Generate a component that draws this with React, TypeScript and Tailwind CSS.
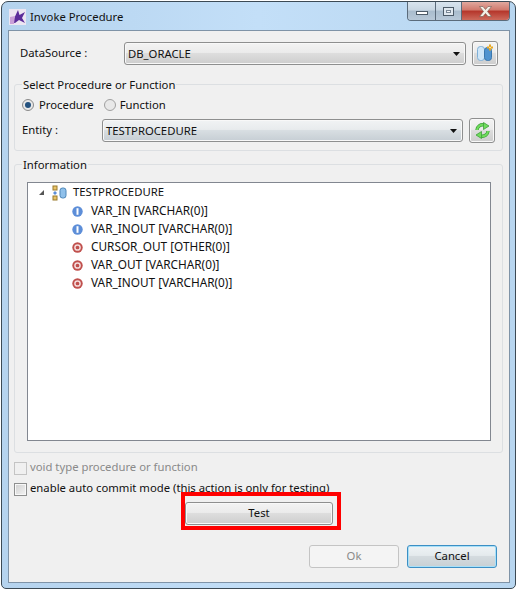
import React from 'react';

const font = 'font-["Noto_Sans",sans-serif] text-[11.3px] text-[#111]';
const grey = 'bg-[linear-gradient(#f3f3f3_0%,#ebebeb_45%,#dddddd_50%,#cdcdcd_100%)]';

function Combo({ value, width, tint }: { value: string; width: string; tint?: boolean }) {
  return (
    <div className={`${width} h-[23px] rounded-[3px] border border-[#8e8f8f] ${tint ? 'bg-[linear-gradient(#f1f3f4_0%,#e8ebed_45%,#d8dee2_50%,#c6ced4_100%)]' : grey} flex items-center justify-between pl-[3px] pr-[5px] shadow-[inset_0_0_0_1px_#f8f8f8]`}>
      <span className="leading-none">{value}</span>
      <svg width="7" height="4" viewBox="0 0 7 4"><path d="M0 0h7L3.5 4z" fill="#111" /></svg>
    </div>
  );
}

function IconButton({ children }: { children: React.ReactNode }) {
  return (
    <div className={`w-[26px] h-[25px] -mt-px rounded-[3px] border border-[#8e8f8f] ${grey} flex items-center justify-center shadow-[inset_0_0_0_1px_#f8f8f8]`}>
      {children}
    </div>
  );
}

function Group({ label, className, children }: { label: string; className: string; children: React.ReactNode }) {
  return (
    <div className={`relative rounded-[3px] border border-[#dcdfe2] ${className}`}>
      <span className="absolute left-[7px] -top-[8px] bg-[#f0f0f0] px-px leading-[16px]">{label}</span>
      {children}
    </div>
  );
}

function ParamIcon({ kind }: { kind: 'in' | 'out' }) {
  if (kind === 'in') {
    return (
      <svg width="11" height="11" viewBox="0 0 11 11">
        <circle cx="5.5" cy="5.5" r="5.2" fill="#5d8ed8" />
        <rect x="4.5" y="2.2" width="2" height="6.6" fill="#fff" />
      </svg>
    );
  }
  return (
    <svg width="11" height="11" viewBox="0 0 11 11">
      <circle cx="5.5" cy="5.5" r="5.2" fill="#c0504d" />
      <circle cx="5.5" cy="5.5" r="2.6" fill="none" stroke="#f4dcdc" strokeWidth="1.5" />
      <circle cx="5.5" cy="5.5" r="1" fill="#c0504d" />
    </svg>
  );
}

const params: { kind: 'in' | 'out'; text: string }[] = [
  { kind: 'in', text: 'VAR_IN [VARCHAR(0)]' },
  { kind: 'in', text: 'VAR_INOUT [VARCHAR(0)]' },
  { kind: 'out', text: 'CURSOR_OUT [OTHER(0)]' },
  { kind: 'out', text: 'VAR_OUT [VARCHAR(0)]' },
  { kind: 'out', text: 'VAR_INOUT [VARCHAR(0)]' },
];

export default function App() {
  return (
    <div className={`${font} w-[518px] h-[591px] bg-white pl-px pt-px`}>
      <div className="w-[515px] h-[588px] rounded-t-[7px] rounded-b-[5px] border border-[#3c4a55] bg-gradient-to-r from-[#b5d3ee] via-[#c3dff8] to-[#b8d6f0] flex flex-col pl-[6px] pr-[5px] pb-[5px]">
        {/* title bar */}
        <div className="h-[28px] flex items-start justify-between shrink-0">
          <div className="flex items-center gap-[4px] pt-[7px] pl-px">
            <svg width="17" height="16" viewBox="0 0 17 16">
              <rect width="17" height="16" fill="#ece6f2" />
              <path d="M3 14 L9 1 L10.5 6 L16 3 L13 9 L16 14 L10 11 L6 14z" fill="#5b2c9a" />
              <path d="M1 8 L6 7 L5 15 L1 15z" fill="#c9a0d8" />
            </svg>
            <span className="leading-[16px] text-[#111]">Invoke Procedure</span>
          </div>
          <div className="flex h-[19px] w-[103px] rounded-b-[4px] border border-t-0 border-[#5b6b7b] overflow-hidden">
            <div className="w-[28px] border-r border-[#5b6b7b] bg-[linear-gradient(#d8e4ee_0%,#c8d6e2_45%,#a9bccd_50%,#b8c9d8_100%)] flex items-center justify-center">
              <div className="w-[12px] h-[4px] mt-[4px] bg-white border border-[#4d5b68]" />
            </div>
            <div className="w-[26px] border-r border-[#5b6b7b] bg-[linear-gradient(#d8e4ee_0%,#c8d6e2_45%,#a9bccd_50%,#b8c9d8_100%)] flex items-center justify-center">
              <div className="w-[11px] h-[9px] bg-[#dfe7ee] border border-[#4d5b68] flex items-center justify-center">
                <div className="w-[5px] h-[3px] bg-[#f5f7f9] border border-[#7a8896]" />
              </div>
            </div>
            <div className="flex-1 bg-[linear-gradient(#e0a89e_0%,#d0786c_45%,#b5352a_50%,#cc6a5c_100%)] flex items-center justify-center">
              <svg width="13" height="11" viewBox="0 0 13 11">
                <path d="M0.5 0.5h3.500l2.500 3 2.500-3h3.500l-4 5 4 5h-3.500l-2.500-3-2.500 3H0.500l4-5z" fill="#f4efe6" stroke="#6b5a52" strokeWidth=".6" />
              </svg>
            </div>
          </div>
        </div>

        {/* client area */}
        <div className="flex-1 border border-[#7f93a7] bg-[#f0f0f0] flex flex-col pl-[5px] pr-[6px]">
          <div className="flex items-center mt-[11px] h-[23px] pl-[6px]">
            <span className="w-[104px]">DataSource :</span>
            <Combo value="DB_ORACLE" width="w-[342px]" />
            <div className="ml-[6px]">
              <IconButton>
                <svg width="20" height="20" viewBox="0 0 20 20">
                  <rect x="2.5" y="3.5" width="7" height="14" rx="3" fill="#cfe6f8" stroke="#7fb0d8" />
                  <rect x="9.5" y="4.5" width="7" height="13" rx="3" fill="#4f93d0" stroke="#3a77ad" />
                  <path d="M15 1.500v6M12 4.500h6" stroke="#e8a820" strokeWidth="2" />
                  <rect x="14.4" y="3.900" width="1.200" height="1.200" fill="#fff" />
                </svg>
              </IconButton>
            </div>
          </div>

          <Group label="Select Procedure or Function" className="mt-[19px] h-[67px] px-[7px]">
            <div className="flex items-center mt-[11px] h-[18px]">
              <span className="w-[12px] h-[12px] rounded-full border border-[#8a8a8a] bg-[#e8e8e8] flex items-center justify-center">
                <span className="w-[6px] h-[6px] rounded-full bg-[#24527f]" />
              </span>
              <span className="ml-[5px]">Procedure</span>
              <span className="ml-[10px] w-[12px] h-[12px] rounded-full border border-[#a0a0a0] bg-[#e8e8e8]" />
              <span className="ml-[4px]">Function</span>
            </div>
            <div className="flex items-center mt-[5px] h-[23px]">
              <span className="w-[80px]">Entity :</span>
              <Combo value="TESTPROCEDURE" width="w-[361px]" tint />
              <div className="ml-[6px]">
                <IconButton>
                  <svg width="15" height="17" viewBox="0 0 15 17">
                    <path d="M2 8A5.500 5.500 0 0 1 9 3" fill="none" stroke="#3f9f3a" strokeWidth="3.400" />
                    <path d="M2 8A5.500 5.500 0 0 1 9 3" fill="none" stroke="#6fdc5c" strokeWidth="2" />
                    <path d="M8.500.5 14 4 8.500 7.500z" fill="#6fdc5c" stroke="#3f9f3a" strokeWidth=".8" />
                    <path d="M13 9A5.500 5.500 0 0 1 6 14" fill="none" stroke="#3f9f3a" strokeWidth="3.400" />
                    <path d="M13 9A5.500 5.500 0 0 1 6 14" fill="none" stroke="#6fdc5c" strokeWidth="2" />
                    <path d="M6.500 9.500 1 13l5.500 3.500z" fill="#6fdc5c" stroke="#3f9f3a" strokeWidth=".8" />
                  </svg>
                </IconButton>
              </div>
            </div>
          </Group>

          <Group label="Information" className="mt-[13px] h-[289px] pl-[12px] pr-[11px] pt-[17px]">
            <div className="h-[259px] border border-[#828790] bg-white">
              <div className="flex items-center h-[19px] pl-[10px]">
                <svg width="7" height="7" viewBox="0 0 7 7"><path d="M6 1v5H1z" fill="#555" /></svg>
                <svg className="ml-[7px]" width="16" height="16" viewBox="0 0 16 16">
                  <rect x="1" y="1" width="4" height="4" fill="#e9c46a" stroke="#9a7b2c" />
                  <rect x="1" y="11" width="4" height="4" fill="#e9c46a" stroke="#9a7b2c" />
                  <path d="M3 6l2 2-2 2-2-2z" fill="#5d8ed8" />
                  <rect x="8" y="3" width="6" height="10" rx="2.500" fill="#8fc0ea" stroke="#4c86b8" />
                </svg>
                <span className="ml-[5px]">TESTPROCEDURE</span>
              </div>
              {params.map((p, i) => (
                <div key={i} className="flex items-center h-[18px] pl-[44px]">
                  <ParamIcon kind={p.kind} />
                  <span className="ml-[8px] text-[11.8px]">{p.text}</span>
                </div>
              ))}
            </div>
          </Group>

          <div className="flex items-center mt-[8px] h-[14px]">
            <span className="w-[13px] h-[13px] border border-[#c4c4c4] bg-[#f0f0f0]" />
            <span className="ml-[3px] -mt-[2px] text-[#8a8a8a]">void type procedure or function</span>
          </div>
          <div className="flex items-center mt-[7px] h-[14px]">
            <span className="w-[13px] h-[13px] border border-[#8e8f8f] bg-gradient-to-br from-[#d0d0d0] to-[#f4f4f4] shadow-[inset_0_0_0_1px_#f8f8f8]" />
            <span className="ml-[3px] -mt-[2px]">enable auto commit mode (this action is only for testing)</span>
          </div>

          <div className="relative self-start ml-[167px] -mt-[4px] border-[4px] border-[#f00] pt-[6px] pr-[4px] pb-px">
            <div className={`w-[148px] h-[23px] rounded-[3px] border border-[#8e8f8f] ${grey} flex items-center justify-center shadow-[inset_0_0_0_1px_#f8f8f8]`}>
              Test
            </div>
          </div>

          <div className="flex justify-end gap-[8px] mt-[15px] pr-[6px]">
            <div className="w-[90px] h-[23px] rounded-[3px] border border-[#c4c4c4] bg-[#f4f4f4] flex items-center justify-center text-[#8a8a8a]">Ok</div>
            <div className="w-[90px] h-[23px] rounded-[3px] border border-[#3c8fc4] bg-[linear-gradient(#eef3f5_0%,#e4eaed_45%,#d4dbdf_50%,#c8d0d4_100%)] flex items-center justify-center shadow-[inset_0_0_0_1px_#a8e0f8]">Cancel</div>
          </div>
        </div>
      </div>
    </div>
  );
}
